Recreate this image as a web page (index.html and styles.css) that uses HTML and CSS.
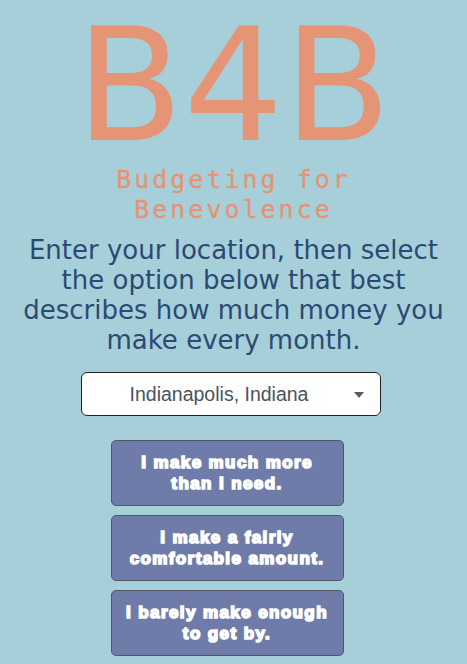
FILE: index.html
```html
<!DOCTYPE html>
<html>
<head>
<meta charset="utf-8">
<link rel="stylesheet" href="styles.css">
</head>
<body>
<main class="page">
  <h1 class="logo">B4B</h1>
  <h2 class="tagline">Budgeting for<br>Benevolence</h2>
  <p class="intro">Enter your location, then select the option below that best describes how much money you make every month.</p>
  <div class="select">
    <span class="select-text">Indianapolis, Indiana</span>
    <span class="caret"></span>
  </div>
  <div class="options">
    <button class="option">I make much more<br>than I need.</button>
    <button class="option">I make a fairly<br>comfortable amount.</button>
    <button class="option">I barely make enough<br>to get by.</button>
  </div>
</main>
</body>
</html>
```
FILE: styles.css
```css
html, body {
  margin: 0;
  padding: 0;
  background: #a7cfd9;
}
.page {
  display: flex;
  flex-direction: column;
  align-items: center;
}
.logo {
  margin: 6px 0 0;
  font-family: "DejaVu Sans", sans-serif;
  font-weight: normal;
  font-size: 157px;
  line-height: 160px;
  height: 160px;
  color: #e59475;
}
.tagline {
  margin: -1px 0 0;
  font-family: "DejaVu Sans Mono", monospace;
  font-weight: normal;
  font-size: 25px;
  letter-spacing: 3px;
  line-height: 30px;
  color: #e59475;
  text-align: center;
  -webkit-text-stroke: 0.3px #e59475;
}
.intro {
  margin: 10px 0 0;
  width: 440px;
  font-family: "DejaVu Sans", sans-serif;
  font-size: 26px;
  line-height: 30px;
  color: #2b4a73;
  text-align: center;
}
.select {
  margin: 17px 6px 0 0;
  width: 298px;
  height: 42px;
  border: 1px solid #222;
  border-radius: 6px;
  background: #fff;
  display: flex;
  align-items: center;
  justify-content: center;
  position: relative;
}
.select-text {
  font-family: "Liberation Sans", Arial, sans-serif;
  font-size: 19.5px;
  color: #4a5360;
  margin-right: 23px;
}
.caret {
  position: absolute;
  right: 16px;
  top: 19px;
  width: 0;
  height: 0;
  border-left: 5.5px solid transparent;
  border-right: 5.5px solid transparent;
  border-top: 6px solid #555d66;
}
.options {
  margin: 24px 13px 0 0;
  display: flex;
  flex-direction: column;
  gap: 9px;
}
.option {
  width: 233px;
  height: 66px;
  border: 1px solid #4d5866;
  border-radius: 5px;
  background: #6f7ca9;
  color: #fff;
  font-family: "Liberation Sans", Arial, sans-serif;
  font-weight: bold;
  font-size: 17px;
  line-height: 21px;
  -webkit-text-stroke: 1.6px #fff;
  letter-spacing: 1.4px;
  padding: 0;
}
```
